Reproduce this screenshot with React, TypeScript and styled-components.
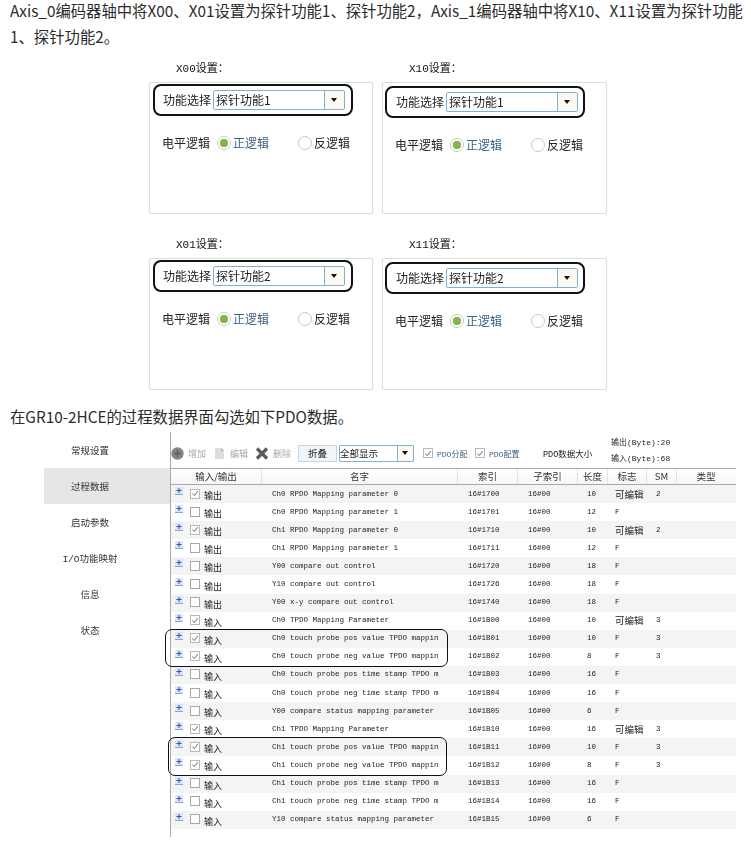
import styled, { createGlobalStyle } from "styled-components";

const cjk = `"Noto Sans CJK SC", "Noto Sans", sans-serif`;
const bitmap = `"Liberation Mono", "Noto Sans CJK SC", monospace`;

type Row = {
  io: string;
  name: string;
  index: string;
  sub: string;
  len: string;
  flag: string;
  sm?: string;
  checked?: boolean;
};

const rows: Row[] = [
  { io: "输出", name: "Ch0 RPDO Mapping parameter 0", index: "16#1700", sub: "16#00", len: "10", flag: "可编辑", sm: "2", checked: true },
  { io: "输出", name: "Ch0 RPDO Mapping parameter 1", index: "16#1701", sub: "16#00", len: "12", flag: "F" },
  { io: "输出", name: "Ch1 RPDO Mapping parameter 0", index: "16#1710", sub: "16#00", len: "10", flag: "可编辑", sm: "2", checked: true },
  { io: "输出", name: "Ch1 RPDO Mapping parameter 1", index: "16#1711", sub: "16#00", len: "12", flag: "F" },
  { io: "输出", name: "Y00 compare out control", index: "16#1720", sub: "16#00", len: "18", flag: "F" },
  { io: "输出", name: "Y10 compare out control", index: "16#1726", sub: "16#00", len: "18", flag: "F" },
  { io: "输出", name: "Y00 x-y compare out control", index: "16#1740", sub: "16#00", len: "18", flag: "F" },
  { io: "输入", name: "Ch0 TPDO Mapping Parameter", index: "16#1B00", sub: "16#00", len: "10", flag: "可编辑", sm: "3", checked: true },
  { io: "输入", name: "Ch0 touch probe pos value TPDO mappin", index: "16#1B01", sub: "16#00", len: "10", flag: "F", sm: "3", checked: true },
  { io: "输入", name: "Ch0 touch probe neg value TPDO mappin", index: "16#1B02", sub: "16#00", len: "8", flag: "F", sm: "3", checked: true },
  { io: "输入", name: "Ch0 touch probe pos time stamp TPDO m", index: "16#1B03", sub: "16#00", len: "16", flag: "F" },
  { io: "输入", name: "Ch0 touch probe neg time stamp TPDO m", index: "16#1B04", sub: "16#00", len: "16", flag: "F" },
  { io: "输入", name: "Y00 compare status mapping parameter", index: "16#1B05", sub: "16#00", len: "6", flag: "F" },
  { io: "输入", name: "Ch1 TPDO Mapping Parameter", index: "16#1B10", sub: "16#00", len: "16", flag: "可编辑", sm: "3", checked: true },
  { io: "输入", name: "Ch1 touch probe pos value TPDO mappin", index: "16#1B11", sub: "16#00", len: "10", flag: "F", sm: "3", checked: true },
  { io: "输入", name: "Ch1 touch probe neg value TPDO mappin", index: "16#1B12", sub: "16#00", len: "8", flag: "F", sm: "3", checked: true },
  { io: "输入", name: "Ch1 touch probe pos time stamp TPDO m", index: "16#1B13", sub: "16#00", len: "16", flag: "F" },
  { io: "输入", name: "Ch1 touch probe neg time stamp TPDO m", index: "16#1B14", sub: "16#00", len: "16", flag: "F" },
  { io: "输入", name: "Y10 compare status mapping parameter", index: "16#1B15", sub: "16#00", len: "6", flag: "F" },
];

const panels = [
  { title: "X00设置：", value: "探针功能1", inset: 0 },
  { title: "X10设置：", value: "探针功能1", inset: 1 },
  { title: "X01设置：", value: "探针功能2", inset: 0 },
  { title: "X11设置：", value: "探针功能2", inset: 1 },
];

const navItems = ["常规设置", "过程数据", "启动参数", "I/O功能映射", "信息", "状态"];

function CheckMark() {
  return (
    <svg width="9" height="9" viewBox="0 0 9 9">
      <path d="M1.5 4.5 L3.7 6.8 L7.6 1.8" fill="none" stroke="#8a8a8a" strokeWidth="1.2" />
    </svg>
  );
}

function Expander() {
  return (
    <ExpanderIcon width="8" height="9" viewBox="0 0 8 9">
      <rect x="0" y="0" width="8" height="8" fill="#dfe5f6" />
      <path d="M4 1 V6 M1.5 3.5 H6.5" stroke="#3450b0" strokeWidth="1" fill="none" />
      <path d="M0 7.5 H8" stroke="#8ea0d8" strokeWidth="1" fill="none" />
    </ExpanderIcon>
  );
}

function TableRow({ row, odd }: { row: Row; odd: boolean }) {
  return (
    <RowLine $odd={odd}>
      <IoCell>
        <Expander />
        <CheckBox $checked={row.checked}>{row.checked && <CheckMark />}</CheckBox>
        <IoText>{row.io}</IoText>
      </IoCell>
      <NameCell>{row.name}</NameCell>
      <IndexCell>{row.index}</IndexCell>
      <SubCell>{row.sub}</SubCell>
      <LenCell>{row.len}</LenCell>
      <FlagCell $cjk={row.flag !== "F"}>{row.flag}</FlagCell>
      <SmCell>{row.sm}</SmCell>
      <span />
    </RowLine>
  );
}

function SettingPanel({ title, value, inset }: { title: string; value: string; inset: number }) {
  return (
    <div>
      <PanelCaption>{title}</PanelCaption>
      <Panel>
        <SelectOutline $inset={inset}>
          <FieldLabel>功能选择</FieldLabel>
          <ComboBox>
            <ComboValue>{value}</ComboValue>
            <ComboArrow />
          </ComboBox>
        </SelectOutline>
        <RadioLine>
          <FieldLabel>电平逻辑</FieldLabel>
          <Radio $on />
          <RadioText $on>正逻辑</RadioText>
          <Radio />
          <RadioText>反逻辑</RadioText>
        </RadioLine>
      </Panel>
    </div>
  );
}

export default function App() {
  return (
    <Page>
      <GlobalStyle />
      <IntroText>
        Axis_0编码器轴中将X00、X01设置为探针功能1、探针功能2，Axis_1编码器轴中将X10、X11设置为探针功能1、探针功能2。
      </IntroText>
      <PanelGrid>
        {panels.map((p) => (
          <SettingPanel key={p.title} title={p.title} value={p.value} inset={p.inset} />
        ))}
      </PanelGrid>
      <SectionText>在GR10-2HCE的过程数据界面勾选如下PDO数据。</SectionText>
      <Window>
        <Nav>
          {navItems.map((item) => (
            <NavItem key={item} $active={item === "过程数据"}>
              {item}
            </NavItem>
          ))}
        </Nav>
        <Content>
          <Toolbar>
            <ToolIcon>
              <svg width="13" height="13" viewBox="0 0 13 13">
                <circle cx="6.5" cy="6.5" r="6.2" fill="#858585" />
                <path d="M6.5 3 V10 M3 6.5 H10" stroke="#5f5f5f" strokeWidth="1.6" />
              </svg>
              <ToolLabel>增加</ToolLabel>
            </ToolIcon>
            <ToolIcon>
              <svg width="13" height="13" viewBox="0 0 13 13">
                <path d="M2 1 H8 L11 4 V12 H2 Z" fill="#dcdcdc" />
                <path d="M8 1 L11 4 H8 Z" fill="#b0b0b0" />
              </svg>
              <ToolLabel>编辑</ToolLabel>
            </ToolIcon>
            <ToolIcon>
              <svg width="14" height="13" viewBox="0 0 14 13">
                <path d="M2 1.5 L12 11.5 M12 1.5 L2 11.5" stroke="#5a5a5a" strokeWidth="3.2" />
              </svg>
              <ToolLabel>删除</ToolLabel>
            </ToolIcon>
            <FoldButton>折叠</FoldButton>
            <ToolCombo>
              <ToolComboValue>全部显示</ToolComboValue>
              <ToolComboArrow />
            </ToolCombo>
            <ToolCheck>
              <CheckBox $checked>
                <CheckMark />
              </CheckBox>
              <ToolCheckLabel>PDO分配</ToolCheckLabel>
            </ToolCheck>
            <ToolCheck>
              <CheckBox $checked>
                <CheckMark />
              </CheckBox>
              <ToolCheckLabel>PDO配置</ToolCheckLabel>
            </ToolCheck>
            <SizeTitle>PDO数据大小</SizeTitle>
            <SizeList>
              <span>输出(Byte):20</span>
              <span>输入(Byte):68</span>
            </SizeList>
          </Toolbar>
          <HeaderRow>
            <HeaderCell>输入/输出</HeaderCell>
            <HeaderCell>名字</HeaderCell>
            <HeaderCell>索引</HeaderCell>
            <HeaderCell>子索引</HeaderCell>
            <HeaderCell>长度</HeaderCell>
            <HeaderCell>标志</HeaderCell>
            <HeaderCell>SM</HeaderCell>
            <HeaderCell>类型</HeaderCell>
          </HeaderRow>
          {rows.slice(0, 8).map((row, i) => (
            <TableRow key={row.index} row={row} odd={i % 2 === 0} />
          ))}
          <RowGroup>
            {rows.slice(8, 10).map((row, i) => (
              <TableRow key={row.index} row={row} odd={(i + 8) % 2 === 0} />
            ))}
            <GroupOutline $left={-6} $width={283} />
          </RowGroup>
          {rows.slice(10, 14).map((row, i) => (
            <TableRow key={row.index} row={row} odd={(i + 10) % 2 === 0} />
          ))}
          <RowGroup>
            {rows.slice(14, 16).map((row, i) => (
              <TableRow key={row.index} row={row} odd={(i + 14) % 2 === 0} />
            ))}
            <GroupOutline $left={-3} $width={279} />
          </RowGroup>
          {rows.slice(16).map((row, i) => (
            <TableRow key={row.index} row={row} odd={(i + 16) % 2 === 0} />
          ))}
        </Content>
      </Window>
    </Page>
  );
}

const GlobalStyle = createGlobalStyle`
  body {
    margin: 0;
    background: #fff;
  }
`;

const Page = styled.div`
  width: 751px;
  height: 841px;
  overflow: hidden;
  font-family: ${cjk};
  color: #222;
`;

const IntroText = styled.p`
  margin: -3px 0 0;
  padding: 0 8px 0 10px;
  font-size: 15.35px;
  line-height: 26px;
  color: #2b2b2b;
`;

const PanelGrid = styled.div`
  display: grid;
  grid-template-columns: 224px 225px;
  column-gap: 9px;
  row-gap: 24px;
  margin: 13px 0 0 149px;
  filter: blur(0.3px);
`;

const PanelCaption = styled.div`
  height: 20px;
  padding: 1px 0 0 27px;
  box-sizing: border-box;
  font-family: ${bitmap};
  font-size: 11px;
  line-height: 13px;
  color: #111;
`;

const Panel = styled.div`
  box-sizing: border-box;
  height: 132px;
  padding: 1px 3px;
  border: 1px solid #d4e4d4;
  border-radius: 2px;
  box-shadow: 0 0 1px #d4e4d4;
`;

const SelectOutline = styled.div<{ $inset: number }>`
  box-sizing: border-box;
  display: flex;
  align-items: center;
  gap: 1px;
  width: 200px;
  height: 32px;
  margin: ${(p) => (p.$inset ? "2px 0 0 -1px" : "0")};
  padding: 0 0 0 ${(p) => (p.$inset ? 9 : 8)}px;
  border: 2px solid #111;
  border-radius: 8px;
`;

const FieldLabel = styled.span`
  width: 49px;
  font-size: 12px;
  line-height: 16px;
  white-space: nowrap;
  color: #222;
`;

const ComboBox = styled.div`
  box-sizing: border-box;
  display: flex;
  width: 132px;
  height: 20px;
  border: 1px solid #7fb2cf;
  border-radius: 2px;
`;

const ComboValue = styled.span`
  flex: 1;
  padding-left: 2px;
  font-size: 12px;
  line-height: 18px;
  color: #222;
`;

const ComboArrow = styled.span`
  position: relative;
  width: 19px;
  background: #fdf8f0;
  border-left: 1px solid #7fb2cf;

  &::after {
    content: "";
    position: absolute;
    left: 6px;
    top: 7px;
    border: 3.5px solid transparent;
    border-top: 4px solid #111;
  }
`;

const RadioLine = styled.div`
  display: flex;
  align-items: center;
  margin-top: 19px;
  padding-left: 9px;
`;

const Radio = styled.span<{ $on?: boolean }>`
  box-sizing: border-box;
  width: 14px;
  height: 14px;
  margin-left: 6px;
  border-radius: 50%;
  border: 1px solid #c9c9c9;
  background: ${(p) => (p.$on ? "radial-gradient(circle, #86b34a 0 4px, #fff 4.5px)" : "#fff")};
`;

const RadioText = styled.span<{ $on?: boolean }>`
  margin: 0 ${(p) => (p.$on ? 23 : 0)}px 0 2px;
  font-size: 12px;
  line-height: 16px;
  color: ${(p) => (p.$on ? "#3d6285" : "#222")};
`;

const SectionText = styled.p`
  margin: 16px 0 0 10px;
  font-size: 15.35px;
  line-height: 20px;
  color: #2b2b2b;
`;

const Window = styled.div`
  display: flex;
  margin: 6px 0 0 44px;
  filter: blur(0.3px);
`;

const Nav = styled.div`
  width: 126px;
  flex: none;
`;

const NavItem = styled.div<{ $active?: boolean }>`
  height: 36px;
  width: 126px;
  padding-right: 34px;
  box-sizing: border-box;
  display: flex;
  align-items: center;
  justify-content: center;
  font-family: ${bitmap};
  font-size: 9.5px;
  white-space: nowrap;
  color: #333;
  background: ${(p) => (p.$active ? "#e6e6e6" : "transparent")};
`;

const Content = styled.div`
  width: 565px;
  height: 405px;
  border-left: 1px solid #aaa;
`;

const Toolbar = styled.div`
  display: flex;
  align-items: center;
  height: 36px;
  padding: 6px 0 0;
  box-sizing: border-box;
`;

const ToolIcon = styled.div`
  display: flex;
  align-items: center;
  gap: 4px;
  width: 42px;
  flex: none;
`;

const ToolLabel = styled.span`
  font-size: 9px;
  color: #aaa;
  white-space: nowrap;
`;

const FoldButton = styled.span`
  box-sizing: border-box;
  width: 39px;
  height: 17px;
  margin-left: 1px;
  text-align: center;
  font-size: 9.5px;
  line-height: 15px;
  background: #f2f5f8;
  border: 1px solid #c4d6e4;
`;

const ToolCombo = styled.span`
  box-sizing: border-box;
  display: flex;
  width: 75px;
  height: 17px;
  margin-left: 2px;
  border: 1px solid #7fb2cf;
  border-radius: 1px;
`;

const ToolComboValue = styled.span`
  flex: 1;
  font-size: 9.5px;
  line-height: 15px;
`;

const ToolComboArrow = styled(ComboArrow)`
  width: 15px;

  &::after {
    left: 4px;
    top: 5px;
  }
`;

const ToolCheck = styled.span`
  display: flex;
  align-items: center;
  gap: 4px;
  margin-left: 2px;
  width: 50px;
  flex: none;
`;

const ToolCheckLabel = styled.span`
  font-family: ${bitmap};
  font-size: 8px;
  color: #3d6285;
  white-space: nowrap;
`;

const SizeTitle = styled.span`
  margin-left: 25px;
  width: 68px;
  flex: none;
  font-family: ${bitmap};
  font-size: 8.5px;
  white-space: nowrap;
`;

const SizeList = styled.span`
  display: flex;
  flex-direction: column;
  margin-top: -4px;
  font-family: ${bitmap};
  font-size: 8px;
  line-height: 16px;
  white-space: nowrap;
`;

const columns = "91px 196px 60px 60px 30px 39px 30px 58px";

const HeaderRow = styled.div`
  display: grid;
  grid-template-columns: ${columns};
  height: 17px;
  box-sizing: border-box;
  background: linear-gradient(#fff, #f6f6f6);
  border-top: 1px solid #aaa;
  border-bottom: 1px solid #aaa;
`;

const HeaderCell = styled.span`
  text-align: center;
  font-size: 9.5px;
  line-height: 15px;
  color: #333;
  border-right: 1px solid #e2e2e2;

  &:last-child {
    border-right: none;
  }
`;

const RowGroup = styled.div`
  position: relative;
`;

const GroupOutline = styled.div<{ $left: number; $width: number }>`
  position: absolute;
  top: -1px;
  bottom: -1px;
  left: ${(p) => p.$left}px;
  width: ${(p) => p.$width}px;
  box-sizing: border-box;
  border: 1px solid #111;
  border-radius: 7px;
`;

const RowLine = styled.div<{ $odd: boolean }>`
  display: grid;
  grid-template-columns: ${columns};
  align-items: center;
  box-sizing: border-box;
  height: 18.1px;
  padding-bottom: 1px;
  font-family: ${bitmap};
  font-size: 7.5px;
  color: #222;
  background: ${(p) => (p.$odd ? "#f4f4f4" : "#fff")};
`;

const IoCell = styled.div`
  display: flex;
  align-items: center;
  padding-left: 4px;
`;

const ExpanderIcon = styled.svg`
  flex: none;
  margin-top: -4px;
`;

const CheckBox = styled.span<{ $checked?: boolean }>`
  box-sizing: border-box;
  display: inline-flex;
  align-items: center;
  justify-content: center;
  width: 10px;
  height: 10px;
  margin-left: 7px;
  flex: none;
  background: #fff;
  border: 1px solid ${(p) => (p.$checked ? "#b8b8b8" : "#a8a8a8")};
`;

const IoText = styled.span`
  margin: 4px 0 0 4px;
  font-family: ${cjk};
  font-size: 9px;
`;

const NameCell = styled.span`
  padding-left: 10px;
  white-space: nowrap;
  overflow: hidden;
`;

const IndexCell = styled.span`
  padding-left: 10px;
`;

const SubCell = styled.span`
  padding-left: 10px;
`;

const LenCell = styled.span`
  padding-left: 9px;
`;

const FlagCell = styled.span<{ $cjk?: boolean }>`
  padding-left: 7px;
  white-space: nowrap;
  font-family: ${(p) => (p.$cjk ? cjk : bitmap)};
  font-size: ${(p) => (p.$cjk ? 9.5 : 7.5)}px;
`;

const SmCell = styled.span`
  padding-left: 9px;
`;
